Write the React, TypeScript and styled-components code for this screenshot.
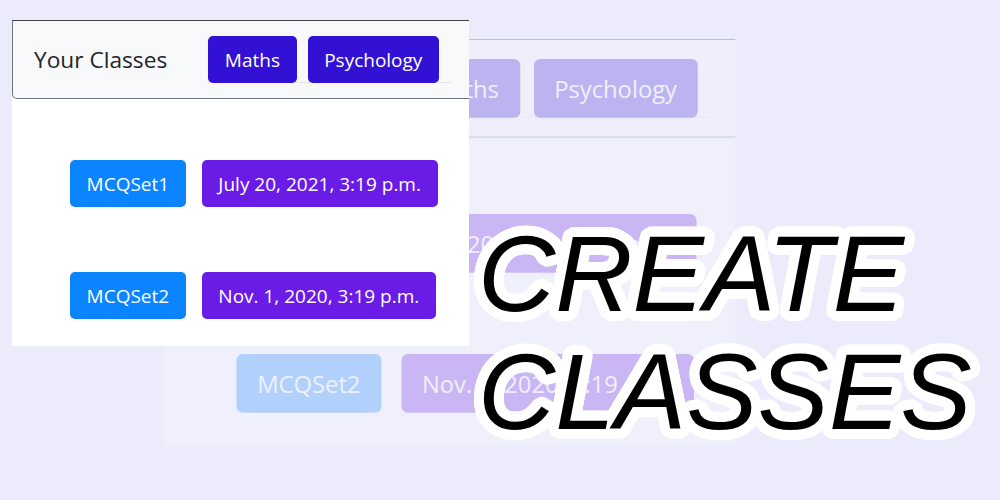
import React from 'react';
import styled, { createGlobalStyle } from 'styled-components';

const GlobalStyle = createGlobalStyle`
  html, body {
    margin: 0;
    padding: 0;
    background: #ecebfb;
  }
`;

// ring of hard shadows gives the round white outline of the title
const outline = (() => {
  const out: string[] = [];
  [10, 7, 4].forEach((r) => {
    const steps = r === 10 ? 32 : 16;
    for (let i = 0; i < steps; i++) {
      const a = (i / steps) * Math.PI * 2;
      out.push(
        `${(Math.cos(a) * r).toFixed(2)}px ${(Math.sin(a) * r).toFixed(2)}px 0 #fff`
      );
    }
  });
  return out.join(', ');
})();

const Page = styled.div`
  position: relative;
  width: 1000px;
  height: 500px;
  overflow: hidden;
  box-sizing: border-box;
  padding: 20px 0 0 12px;
  background: #ecebfb;
  font-family: 'Open Sans', 'Noto Sans', sans-serif;
`;

const Ghost = styled.div`
  position: absolute;
  left: 163.5px;
  top: 39px;
  transform: scale(1.25);
  transform-origin: 0 0;
  opacity: 0.25;
  pointer-events: none;
`;

const Front = styled.div`
  position: relative;
`;

const Card = styled.div`
  width: 457px;
  height: 326px;
  overflow: hidden;
  background: #fff;
`;

const Header = styled.div`
  display: flex;
  align-items: center;
  box-sizing: border-box;
  width: 480px;
  height: 79px;
  padding-left: 21px;
  background: #f8f9fa;
  border: 1px solid #6c757d;
  border-top-color: #3b3f44;
  border-radius: 0 0 0 5px;
`;

const Brand = styled.span`
  font-size: 22.7px;
  color: #212529;
  margin-right: 41px;
`;

const ButtonGroup = styled.div`
  display: flex;
  gap: 11px;
  padding-right: 12px;
  box-shadow: inset 0 -1px 0 #e3e4e7;
`;

const Btn = styled.span<{ $bg: string }>`
  display: inline-flex;
  align-items: center;
  justify-content: center;
  height: 47px;
  padding: 0 16.6px;
  border-radius: 5px;
  background: ${(p) => p.$bg};
  color: #fff;
  font-size: 19px;
  white-space: nowrap;
`;

const Body = styled.div`
  display: flex;
  flex-direction: column;
  gap: 65px;
  padding: 61px 0 0 58px;
`;

const Row = styled.div`
  display: flex;
  gap: 16px;
`;

const Title = styled.h1`
  position: absolute;
  left: 478px;
  top: 215px;
  margin: 0;
  font-family: 'Liberation Sans', Arial, sans-serif;
  font-style: italic;
  font-weight: 400;
  font-size: 107px;
  line-height: 118px;
  color: #000;
  text-shadow: ${outline};
`;

const TitleLine = styled.span`
  display: block;
`;

const CLASSES = ['Maths', 'Psychology'];
const SETS = [
  { name: 'MCQSet1', date: 'July 20, 2021, 3:19 p.m.' },
  { name: 'MCQSet2', date: 'Nov. 1, 2020, 3:19 p.m.' },
];

const ClassesCard = () => (
  <Card>
    <Header>
      <Brand>Your Classes</Brand>
      <ButtonGroup>
        {CLASSES.map((c) => (
          <Btn key={c} $bg="#3211d4">
            {c}
          </Btn>
        ))}
      </ButtonGroup>
    </Header>
    <Body>
      {SETS.map((s) => (
        <Row key={s.name}>
          <Btn $bg="#0a84ff">{s.name}</Btn>
          <Btn $bg="#6a1be6">{s.date}</Btn>
        </Row>
      ))}
    </Body>
  </Card>
);

export default function App() {
  return (
    <>
      <GlobalStyle />
      <Page>
        <Ghost>
          <ClassesCard />
        </Ghost>
        <Front>
          <ClassesCard />
        </Front>
        <Title>
          <TitleLine>CREATE</TitleLine>
          <TitleLine>CLASSES</TitleLine>
        </Title>
      </Page>
    </>
  );
}
